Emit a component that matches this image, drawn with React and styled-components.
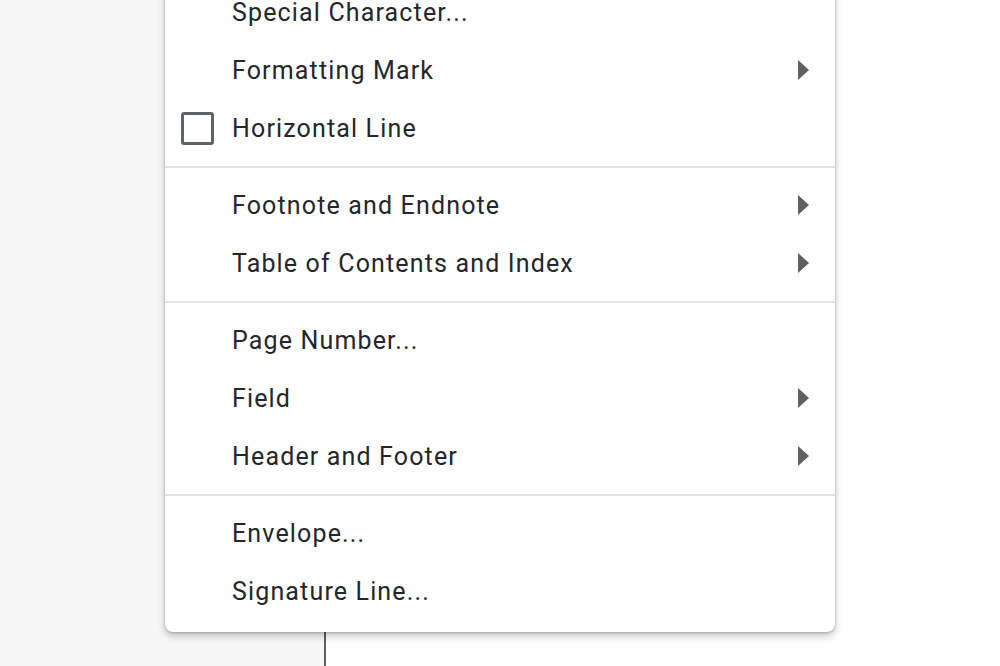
import React from "react";
import styled, { createGlobalStyle } from "styled-components";

const Global = createGlobalStyle`
  html, body { margin: 0; padding: 0; }
  body {
    width: 1000px;
    height: 666px;
    overflow: hidden;
    font-family: Roboto, "Noto Sans", "Liberation Sans", sans-serif;
  }
`;

const Stage = styled.div`
  position: relative;
  width: 1000px;
  height: 666px;
  display: flex;
  overflow: hidden;
  background: #ffffff;
`;

const SidePane = styled.div`
  width: 324px;
  height: 100%;
  background: #f7f7f7;
  border-right: 2px solid #5e5e5e;
`;

const Page = styled.div`
  flex: 1;
  background: #ffffff;
`;

const Menu = styled.div`
  position: absolute;
  left: 165px;
  top: -27px;
  width: 670px;
  padding: 10px 0 12px;
  background: #ffffff;
  border-radius: 0 0 8px 8px;
  box-shadow: 0 4px 8px rgba(0, 0, 0, 0.22), 0 1px 3px rgba(0, 0, 0, 0.18),
    0 0 2px rgba(0, 0, 0, 0.12);
  display: flex;
  flex-direction: column;
`;

const Row = styled.div`
  height: 58px;
  display: flex;
  align-items: center;
  padding: 0 26px 0 16px;
  color: #24262a;
  font-size: 25px;
  letter-spacing: 1.15px;
`;

const IconSlot = styled.div`
  width: 51px;
  height: 100%;
  display: flex;
  align-items: center;
  justify-content: flex-start;
`;

const Checkbox = styled.span`
  display: block;
  width: 27px;
  height: 27px;
  border: 3px solid #5f6368;
  border-radius: 3px;
`;

const Label = styled.span`
  flex: 1;
  white-space: nowrap;
`;

const Arrow = styled.span`
  width: 0;
  height: 0;
  border-top: 10px solid transparent;
  border-bottom: 10px solid transparent;
  border-left: 11px solid #606060;
`;

const Separator = styled.div`
  height: 2px;
  margin: 9px 0 8px;
  background: #e2e2e2;
`;

const groups = [
  [
    { label: "Special Character..." },
    { label: "Formatting Mark", sub: true },
    { label: "Horizontal Line", check: true },
  ],
  [
    { label: "Footnote and Endnote", sub: true },
    { label: "Table of Contents and Index", sub: true },
  ],
  [
    { label: "Page Number..." },
    { label: "Field", sub: true },
    { label: "Header and Footer", sub: true },
  ],
  [{ label: "Envelope..." }, { label: "Signature Line..." }],
];

export default function App() {
  return (
    <>
      <Global />
      <Stage>
        <SidePane />
        <Page />
        <Menu>
          {groups.map((g, gi) => (
            <React.Fragment key={gi}>
              {gi > 0 && <Separator />}
              {g.map((item) => (
                <Row key={item.label}>
                  <IconSlot>{item.check && <Checkbox />}</IconSlot>
                  <Label>{item.label}</Label>
                  {item.sub && <Arrow />}
                </Row>
              ))}
            </React.Fragment>
          ))}
        </Menu>
      </Stage>
    </>
  );
}
